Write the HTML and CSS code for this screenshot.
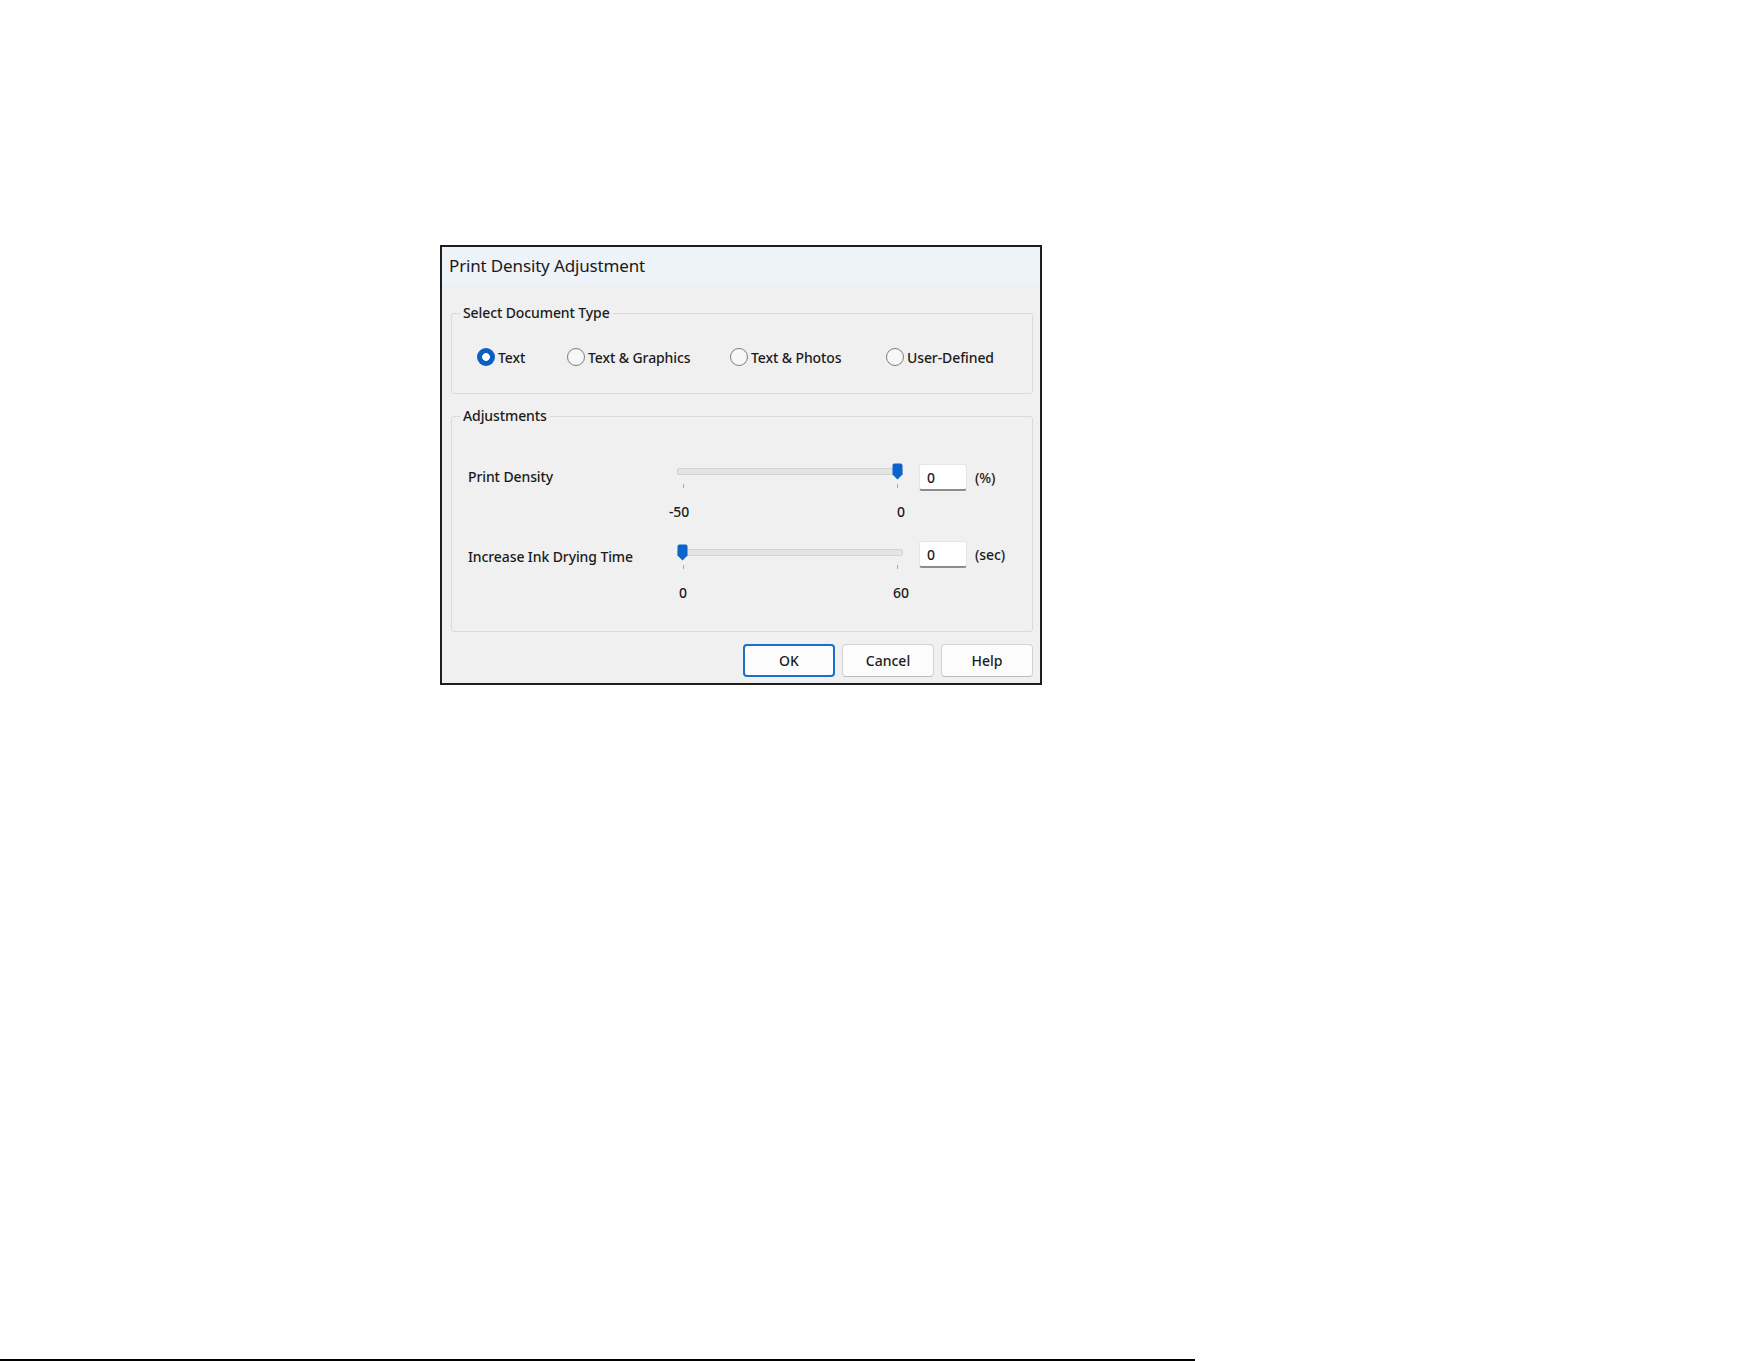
FILE: index.html
```html
<!DOCTYPE html>
<html lang="en">
<head>
<meta charset="utf-8">
<title>Print Density Adjustment</title>
<link rel="stylesheet" href="styles.css">
</head>
<body>
<div class="page">
  <div class="dialog">
    <div class="titlebar">Print Density Adjustment</div>
    <div class="content">
      <div class="group group-doc">
        <div class="group-title">Select Document Type</div>
        <div class="radio-row">
          <label class="radio"><span class="radio-dot checked"></span><span>Text</span></label>
          <label class="radio"><span class="radio-dot"></span><span>Text &amp; Graphics</span></label>
          <label class="radio"><span class="radio-dot"></span><span>Text &amp; Photos</span></label>
          <label class="radio"><span class="radio-dot"></span><span>User-Defined</span></label>
        </div>
      </div>

      <div class="group group-adj">
        <div class="group-title">Adjustments</div>

        <div class="adj-row row-density">
          <div class="adj-label">Print Density</div>
          <div class="slider slider-density">
            <div class="track"></div>
            <span class="tick tick-min"></span>
            <span class="tick tick-max"></span>
            <svg class="thumb at-max" width="11" height="17" viewBox="0 0 11 17"><path d="M0.5 2.5 Q0.5 0.5 2.5 0.5 H8.5 Q10.5 0.5 10.5 2.5 V11.5 L5.5 16.5 L0.5 11.5 Z" fill="#0b63cc"/></svg>
          </div>
          <div class="value-box">0</div>
          <div class="unit">(%)</div>
        </div>
        <div class="scale-row scale-density">
          <span class="scale-neg">-50</span>
          <span>0</span>
        </div>

        <div class="adj-row row-drying">
          <div class="adj-label">Increase Ink Drying Time</div>
          <div class="slider slider-drying">
            <div class="track"></div>
            <span class="tick tick-min"></span>
            <span class="tick tick-max"></span>
            <svg class="thumb at-min" width="11" height="17" viewBox="0 0 11 17"><path d="M0.5 2.5 Q0.5 0.5 2.5 0.5 H8.5 Q10.5 0.5 10.5 2.5 V11.5 L5.5 16.5 L0.5 11.5 Z" fill="#0b63cc"/></svg>
          </div>
          <div class="value-box">0</div>
          <div class="unit">(sec)</div>
        </div>
        <div class="scale-row scale-drying">
          <span>0</span>
          <span>60</span>
        </div>
      </div>

      <div class="buttons">
        <button class="btn btn-default">OK</button>
        <button class="btn">Cancel</button>
        <button class="btn">Help</button>
      </div>
    </div>
  </div>
  <div class="page-rule"></div>
</div>
</body>
</html>
```

FILE: styles.css
```css
* {
  box-sizing: border-box;
}

html, body {
  margin: 0;
  padding: 0;
  background: #ffffff;
}

body {
  font-family: "Noto Sans", "Open Sans", sans-serif;
  color: #1b1b1b;
}

.page {
  min-height: 1361px;
  padding: 245px 0 0 440px;
  display: flex;
  flex-direction: column;
  align-items: flex-start;
}

.page-rule {
  margin-top: auto;
  margin-left: -440px;
  width: 1195px;
  height: 2px;
  background: #000;
}

/* dialog window */
.dialog {
  width: 602px;
  height: 440px;
  border: 2px solid #1e1e1e;
  background: #f0f0f0;
  display: flex;
  flex-direction: column;
}

.titlebar {
  height: 38px;
  line-height: 37px;
  padding-left: 7px;
  background: #eef2f9;
  font-size: 17px;
  color: #1a1a1a;
  letter-spacing: -0.15px;
}

.content {
  padding: 0 7px 6px 9px;
  display: flex;
  flex-direction: column;
  font-size: 14px;
  font-weight: 500;
  letter-spacing: -0.1px;
}

/* group boxes */
.group {
  border: 1px solid #dadada;
  border-radius: 3px;
}

.group-title {
  width: max-content;
  margin: -11px 0 0 8px;
  padding: 0 3px;
  line-height: 20px;
  background: #f0f0f0;
}

.group-doc {
  margin-top: 28px;
  height: 81px;
}

.group-adj {
  margin-top: 22px;
  height: 216px;
}

/* radio buttons */
.radio-row {
  margin-top: 24px;
  padding-left: 25px;
  height: 20px;
  display: grid;
  grid-template-columns: 90px 163px 156px auto;
  align-items: center;
}

.radio {
  display: flex;
  align-items: center;
  gap: 3px;
  white-space: nowrap;
}

.radio-dot {
  width: 18px;
  height: 18px;
  border-radius: 50%;
  border: 1px solid #7d7d7d;
  background: #f7f7f7;
  flex: none;
}

.radio-dot.checked {
  border: none;
  background: radial-gradient(circle, #ffffff 0 3.5px, #0b5fc2 4.2px);
}

/* adjustment rows */
.adj-row {
  display: flex;
  align-items: center;
  height: 27px;
  padding-left: 16px;
}

.row-density {
  margin-top: 38px;
}

.row-drying {
  margin-top: 20px;
}

.adj-label {
  width: 209px;
  white-space: nowrap;
}

.row-density .adj-label {
  margin-top: -3px;
}

.row-drying .adj-label {
  margin-top: 3px;
}

.slider {
  position: relative;
  width: 226px;
  height: 26px;
  align-self: flex-start;
}

.slider-density {
  margin-top: -1px;
}

.slider-drying {
  margin-top: 3px;
}

.track {
  position: absolute;
  left: 0;
  right: 0;
  top: 5px;
  height: 7px;
  background: #e4e4e4;
  border: 1px solid #d3d3d3;
  border-radius: 2px;
}

.tick {
  position: absolute;
  top: 21px;
  width: 1px;
  height: 4px;
  background: #a8a8a8;
}

.tick-min {
  left: 6px;
}

.tick-max {
  left: 220px;
}

.thumb {
  position: absolute;
  top: 0;
  display: block;
}

.thumb.at-min {
  left: 0;
}

.thumb.at-max {
  left: 215px;
}

.value-box {
  margin-left: 16px;
  width: 48px;
  height: 27px;
  line-height: 25px;
  padding-left: 7px;
  background: #ffffff;
  border: 1px solid #e6e6e6;
  border-bottom: 2px solid #8c8c8c;
  border-radius: 3px;
}

.unit {
  margin-left: 8px;
}

.scale-row {
  display: flex;
  justify-content: space-between;
  width: 242px;
  margin-left: 219px;
  height: 18px;
  line-height: 18px;
}

.scale-row span {
  width: 24px;
  text-align: center;
}

.scale-row .scale-neg {
  margin-left: -4px;
}

.scale-density {
  margin-top: 12px;
}

.scale-drying {
  margin-top: 16px;
}

/* dialog buttons */
.buttons {
  margin-top: 12px;
  display: flex;
  justify-content: flex-end;
  gap: 7px;
}

.btn {
  width: 92px;
  height: 33px;
  font-family: inherit;
  font-size: 14px;
  font-weight: 500;
  color: #1b1b1b;
  background: #fcfcfc;
  border: 1px solid #d2d2d2;
  border-bottom-color: #bcbcbc;
  border-radius: 4px;
  padding: 0;
}

.btn-default {
  border: 2px solid #1a6fcc;
}
```
